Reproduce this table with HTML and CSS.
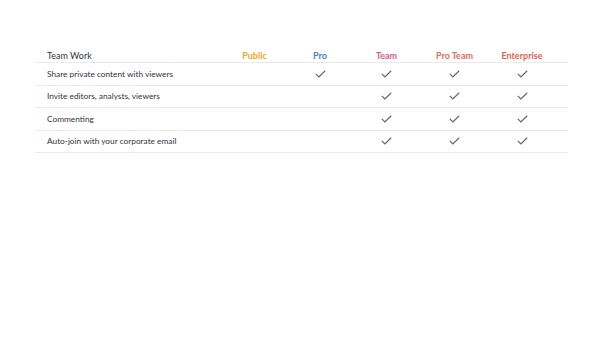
FILE: index.html
```html
<!DOCTYPE html>
<html lang="en">
<head>
  <meta charset="UTF-8" />
  <title>Team Work</title>
  <link rel="stylesheet" href="styles.css">
</head>
<body>
  <div class="container">
    <table class="plans">
      <colgroup>
        <col class="col-feature">
        <col class="col-public">
        <col class="col-pro">
        <col class="col-team">
        <col class="col-pro-team">
        <col class="col-enterprise">
        <col>
      </colgroup>
      <thead>
        <tr>
          <th class="feature">Team Work</th>
          <th class="public">Public</th>
          <th class="pro">Pro</th>
          <th class="team">Team</th>
          <th class="pro-team">Pro Team</th>
          <th class="enterprise">Enterprise</th>
          <th></th>
        </tr>
      </thead>
      <tbody>
        <tr>
          <td class="feature">Share private content with viewers</td>
          <td></td>
          <td><span class="check"></span></td>
          <td><span class="check"></span></td>
          <td><span class="check"></span></td>
          <td><span class="check"></span></td>
          <td></td>
        </tr>
        <tr>
          <td class="feature">Invite editors, analysts, viewers</td>
          <td></td>
          <td></td>
          <td><span class="check"></span></td>
          <td><span class="check"></span></td>
          <td><span class="check"></span></td>
          <td></td>
        </tr>
        <tr>
          <td class="feature">Commenting</td>
          <td></td>
          <td></td>
          <td><span class="check"></span></td>
          <td><span class="check"></span></td>
          <td><span class="check"></span></td>
          <td></td>
        </tr>
        <tr>
          <td class="feature">Auto-join with your corporate email</td>
          <td></td>
          <td></td>
          <td><span class="check"></span></td>
          <td><span class="check"></span></td>
          <td><span class="check"></span></td>
          <td></td>
        </tr>
      </tbody>
    </table>
  </div>

  <script>
    // draw the same tick in every marked cell
    const TICK = '<svg width="11" height="8" viewBox="0 0 11 8"><path d="M0.8 3.9 L3.9 6.9 L10.2 0.8" fill="none" stroke="#66666e" stroke-width="1.2"/></svg>';
    document.querySelectorAll('.check').forEach(el => {
      el.innerHTML = TICK;
    });
  </script>
</body>
</html>
```

FILE: styles.css
```css
body {
  margin: 0;
  font-family: 'Lato', 'Open Sans', sans-serif;
  background-color: #ffffff;
  color: #2f3442;
}

.container {
  padding: 46px 0 0 35px;
}

.plans {
  width: 533px;
  border-collapse: collapse;
  table-layout: fixed;
}

.col-feature { width: 187px; }
.col-public { width: 65px; }
.col-pro { width: 66px; }
.col-team { width: 67px; }
.col-pro-team { width: 69px; }
.col-enterprise { width: 66px; }

th, td {
  padding: 0;
  text-align: center;
  border-bottom: 1px solid #ebebeb;
}

th {
  height: 15px;
  padding-bottom: 1px;
  vertical-align: bottom;
  font-weight: 700;
  font-size: 9px;
}

td {
  height: 21.5px;
  vertical-align: middle;
  font-size: 8.3px;
}

.feature {
  text-align: left;
  padding-left: 12px;
  white-space: nowrap;
}

th.feature {
  font-weight: 400;
}

.public { color: #f5a623; }
.pro { color: #4a7fd6; }
.team { color: #e9568a; }
.pro-team { color: #ea6a5c; }
.enterprise { color: #e9604f; }

.check {
  display: inline-block;
  line-height: 0;
  padding-top: 2px;
}
```
